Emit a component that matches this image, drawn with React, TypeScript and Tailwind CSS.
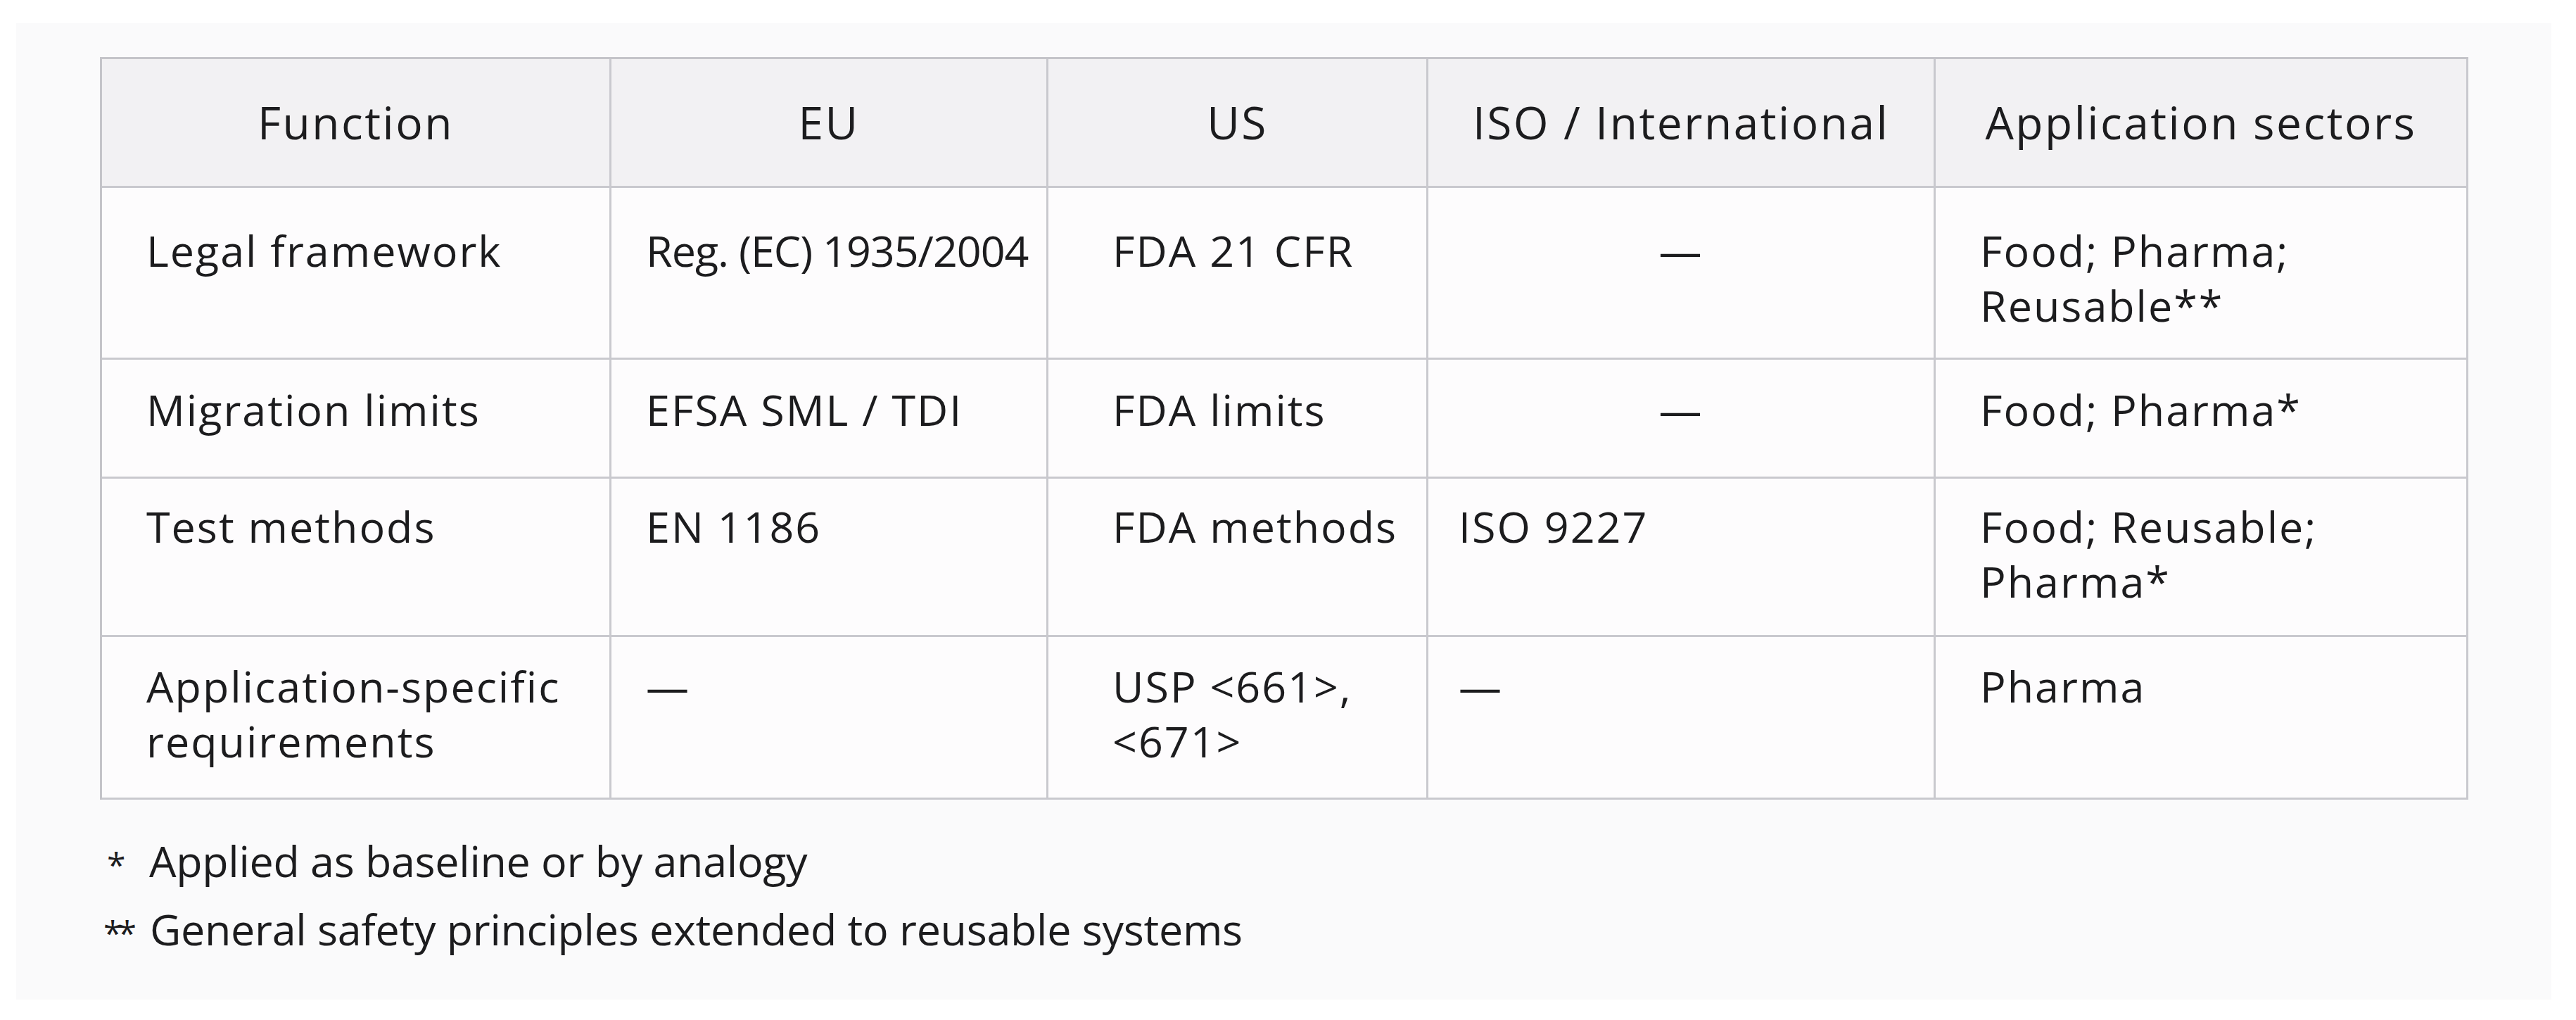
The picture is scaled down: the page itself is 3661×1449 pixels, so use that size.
type Cell = {
  lines: string[]
  center?: boolean
  tight?: boolean
}

const cols = [
  { w: 'w-[724px]', pl: 'pl-[63px]' },
  { w: 'w-[621px]', pl: 'pl-[49px]' },
  { w: 'w-[540px]', pl: 'pl-[91px]' },
  { w: 'w-[721px]', pl: 'pl-[43px]' },
  { w: 'w-[757px]', pl: 'pl-[63px]' },
]

const headers = ['Function', 'EU', 'US', 'ISO / International', 'Application sectors']

const rows: { h: string; pt: string; cells: Cell[] }[] = [
  {
    h: 'h-[244px]',
    pt: 'pt-[50px]',
    cells: [
      { lines: ['Legal framework'] },
      { lines: ['Reg. (EC) 1935/2004'], tight: true },
      { lines: ['FDA 21 CFR'] },
      { lines: ['—'], center: true },
      { lines: ['Food; Pharma;', 'Reusable**'] },
    ],
  },
  {
    h: 'h-[169px]',
    pt: 'pt-[32px]',
    cells: [
      { lines: ['Migration limits'] },
      { lines: ['EFSA SML / TDI'] },
      { lines: ['FDA limits'] },
      { lines: ['—'], center: true },
      { lines: ['Food; Pharma*'] },
    ],
  },
  {
    h: 'h-[225px]',
    pt: 'pt-[29px]',
    cells: [
      { lines: ['Test methods'] },
      { lines: ['EN 1186'] },
      { lines: ['FDA methods'] },
      { lines: ['ISO 9227'] },
      { lines: ['Food; Reusable;', 'Pharma*'] },
    ],
  },
  {
    h: 'h-[231px]',
    pt: 'pt-[31px]',
    cells: [
      { lines: ['Application-specific', 'requirements'] },
      { lines: ['—'] },
      { lines: ['USP <661>,', '<671>'] },
      { lines: ['—'] },
      { lines: ['Pharma'] },
    ],
  },
]

function App(): JSX.Element {
  return (
    <div className="w-[3661px] h-[1449px] bg-white pt-[33px] pl-[23px] font-['Open_Sans',sans-serif] text-[#1c1c1e]">
      <div className="w-[3603px] h-[1387px] bg-[#fafafb] pt-[48px] pl-[119px]">
        <div className="inline-flex flex-col border-l-[3px] border-t-[3px] border-[#c4c4c9]">
          <div className="flex h-[183px] bg-[#f2f1f3]">
            {headers.map((h, i) => (
              <div
                key={h}
                className={`${cols[i].w} flex items-center justify-center border-r-[3px] border-b-[3px] border-[#c9c9ce] text-[64px] tracking-[2.5px] whitespace-nowrap`}
              >
                {h}
              </div>
            ))}
          </div>

          {rows.map((row, r) => (
            <div key={r} className={`flex ${row.h} bg-[#fdfcfd]`}>
              {row.cells.map((c, i) => (
                <div
                  key={i}
                  className={`${cols[i].w} ${row.pt} ${c.center ? 'text-center' : cols[i].pl} border-r-[3px] border-b-[3px] border-[#c9c9ce] text-[61px] leading-[78px] whitespace-nowrap ${c.tight ? 'tracking-[-1px]' : 'tracking-[2px]'}`}
                >
                  {c.lines.map((l) => (
                    <div key={l}>{l}</div>
                  ))}
                </div>
              ))}
            </div>
          ))}
        </div>

        <div className="mt-[41px] text-[61px] leading-[92px] tracking-[-0.3px] whitespace-nowrap">
          <div className="flex items-baseline pl-[10px]">
            <span className="w-[60px] text-[48px]">*</span>
            <span>Applied as baseline or by analogy</span>
          </div>
          <div className="flex items-baseline pl-[5px]">
            <span className="w-[66px] text-[48px] tracking-[-6px]">**</span>
            <span>General safety principles extended to reusable systems</span>
          </div>
        </div>
      </div>
    </div>
  )
}

export default App
